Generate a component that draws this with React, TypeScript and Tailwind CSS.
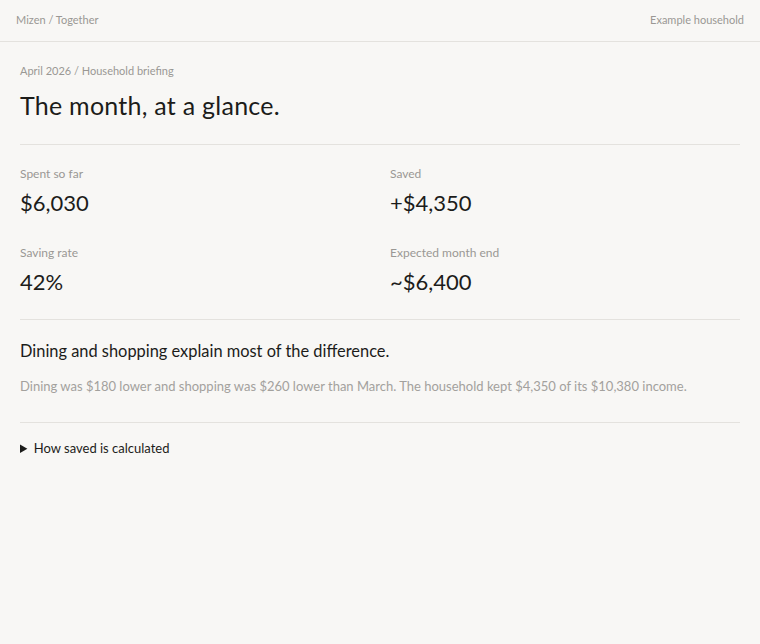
const stats = [
  { label: "Spent so far", value: "$6,030" },
  { label: "Saved", value: "+$4,350" },
  { label: "Saving rate", value: "42%" },
  { label: "Expected month end", value: "~$6,400" },
];

export default function App() {
  return (
    <div className="min-h-[644px] bg-[#f8f7f5] font-['Lato',sans-serif] text-[#1c1c1a]">
      <header className="flex h-[42px] items-center justify-between border-b border-[#e4e2de] px-4 text-[11px] text-[#9a9894]">
        <span>Mizen / Together</span>
        <span>Example household</span>
      </header>

      <main className="px-5">
        <section className="border-b border-[#e4e2de] pt-[21px] pb-[23px]">
          <p className="text-[11px] text-[#9a9894]">April 2026 / Household briefing</p>
          <h1 className="mt-[10px] text-[25px] leading-tight tracking-[0.25px]">The month, at a glance.</h1>
        </section>

        <section className="grid grid-cols-2 gap-x-5 gap-y-[28px] border-b border-[#e4e2de] pt-[20px] pb-[23px]">
          {stats.map((stat) => (
            <div key={stat.label}>
              <p className="text-[12px] text-[#9a9894]">{stat.label}</p>
              <p className="mt-[6px] text-[22px] leading-tight">{stat.value}</p>
            </div>
          ))}
        </section>

        <section className="border-b border-[#e4e2de] pt-[19px] pb-[25px]">
          <h2 className="text-[16.4px]">Dining and shopping explain most of the difference.</h2>
          <p className="mt-[14px] text-[13px] text-[#a3a19d]">
            Dining was $180 lower and shopping was $260 lower than March. The household kept $4,350 of its $10,380 income.
          </p>
        </section>

        <details className="pt-[16px] text-[13px]">
          <summary className="cursor-pointer">How saved is calculated</summary>
        </details>
      </main>
    </div>
  );
}
